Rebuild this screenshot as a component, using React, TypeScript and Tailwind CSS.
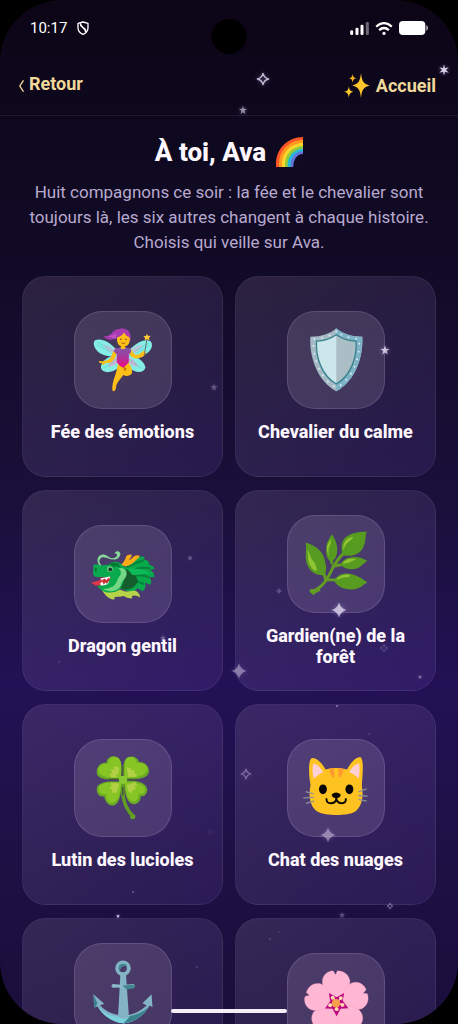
import React from "react";

type StarKind = "four" | "outline" | "five" | "six" | "dot";

interface Star {
  kind: StarKind;
  x: number;
  y: number;
  size: number;
  opacity: number;
}

interface Companion {
  id: string;
  label: string;
  icon: React.ReactNode;
}

const STARS: Star[] = [
  { kind: "outline", x: 263, y: 79, size: 14, opacity: 0.8 },
  { kind: "six", x: 444, y: 70, size: 11, opacity: 0.9 },
  { kind: "five", x: 243, y: 110, size: 8, opacity: 0.6 },
  { kind: "five", x: 214, y: 387, size: 7, opacity: 0.3 },
  { kind: "five", x: 385, y: 350, size: 9, opacity: 0.8 },
  { kind: "dot", x: 190, y: 558, size: 5, opacity: 0.25 },
  { kind: "five", x: 163, y: 638, size: 6, opacity: 0.35 },
  { kind: "dot", x: 59, y: 662, size: 3, opacity: 0.1 },
  { kind: "four", x: 279, y: 591, size: 6, opacity: 0.25 },
  { kind: "four", x: 339, y: 610, size: 15, opacity: 0.75 },
  { kind: "outline", x: 384, y: 648, size: 9, opacity: 0.25 },
  { kind: "dot", x: 420, y: 677, size: 4, opacity: 0.4 },
  { kind: "four", x: 239, y: 671, size: 15, opacity: 0.45 },
  { kind: "outline", x: 246, y: 774, size: 12, opacity: 0.4 },
  { kind: "four", x: 328, y: 835, size: 15, opacity: 0.45 },
  { kind: "dot", x: 337, y: 706, size: 2, opacity: 0.8 },
  { kind: "dot", x: 369, y: 734, size: 3, opacity: 0.1 },
  { kind: "outline", x: 210, y: 832, size: 7, opacity: 0.1 },
  { kind: "dot", x: 133, y: 892, size: 2, opacity: 0.5 },
  { kind: "five", x: 118, y: 916, size: 4, opacity: 0.9 },
  { kind: "outline", x: 390, y: 906, size: 7, opacity: 0.6 },
  { kind: "five", x: 342, y: 915, size: 6, opacity: 0.3 },
  { kind: "dot", x: 197, y: 967, size: 2, opacity: 0.3 },
  { kind: "dot", x: 279, y: 932, size: 2, opacity: 0.15 },
  { kind: "dot", x: 270, y: 939, size: 3, opacity: 0.15 },
];

function StarShape({ kind }: { kind: StarKind }) {
  switch (kind) {
    case "four":
      return <path d="M10 0Q12 8 20 10Q12 12 10 20Q8 12 0 10Q8 8 10 0Z" fill="currentColor" />;
    case "outline":
      return (
        <path
          d="M10 2Q11.500 8.500 18 10Q11.500 11.500 10 18Q8.500 11.500 2 10Q8.500 8.500 10 2Z"
          fill="none"
          stroke="currentColor"
          strokeWidth="2"
          strokeLinejoin="round"
        />
      );
    case "five":
      return <path d="M10 0L12.500 7L20 7.500L14 12L16 20L10 15.500L4 20L6 12L0 7.500L7.500 7Z" fill="currentColor" />;
    case "six":
      return (
        <path
          d="M10 0L11.800 7L18.700 5L13.500 10L18.700 15L11.800 13L10 20L8.200 13L1.300 15L6.500 10L1.300 5L8.200 7Z"
          fill="currentColor"
        />
      );
    default:
      return <circle cx="10" cy="10" r="8" fill="currentColor" />;
  }
}

// Decorative twinkling sky that floats over the whole screen
function StarField() {
  return (
    <div className="pointer-events-none absolute inset-0 text-[#efe6ff]" aria-hidden="true">
      {STARS.map((star, i) => (
        <svg
          key={i}
          viewBox="0 0 20 20"
          className="absolute -translate-x-1/2 -translate-y-1/2 overflow-visible drop-shadow-[0_0_2px_rgba(200,180,255,0.5)]"
          style={{ left: star.x, top: star.y, width: star.size, height: star.size, opacity: star.opacity }}
        >
          <StarShape kind={star.kind} />
        </svg>
      ))}
    </div>
  );
}

function FairyIcon() {
  return (
    <svg viewBox="159 107 294 296" className="size-full" aria-hidden="true">
      <defs>
        <linearGradient id="suit" x1="0" y1="0" x2="0" y2="1">
          <stop offset="0" stopColor="#7e57b0" />
          <stop offset="0.450" stopColor="#a63a9c" />
          <stop offset="0.850" stopColor="#e0128c" />
        </linearGradient>
      </defs>
      <path d="M296 236C276 205 240 184 220 194C209 203 221 231 245 239C264 246 285 247 296 236Z" fill="#84eee5" />
      <path d="M316 236C336 208 370 187 391 197C402 209 391 232 371 238C353 246 333 248 316 236Z" fill="#84eee5" />
      <path d="M293 240C264 240 236 257 238 279C242 298 273 296 293 278C304 265 302 247 293 240Z" fill="#84eee5" />
      <path d="M319 240C347 241 373 258 375 278C371 297 343 296 322 277C309 262 309 246 319 240Z" fill="#84eee5" />
      <path d="M296 236C280 218 258 207 244 208C257 229 277 239 296 240Z" fill="#b9c9d8" />
      <path d="M318 236C333 217 352 207 368 208C355 231 337 239 318 240Z" fill="#b9c9d8" />
      <path d="M288 246Q264 255 260 276Q277 276 292 260ZM323 247Q347 257 354 276Q337 276 320 260Z" fill="#c9b5d1" />
      <path
        d="M226 200L276 226M224 208L270 231M248 280L286 253M387 202L342 228M386 211L348 234M363 281L326 253"
        stroke="#4ec3c4"
        strokeWidth="1.500"
        fill="none"
      />
      <path d="M290 265C288 292 278 309 275 326C273 336 272 345 274 350Q278 353 282 348Q285 340 286 331C292 317 302 310 307 301C319 308 334 302 334 293C334 283 331 273 324 264Z" fill="#fdbf16" />
      <path d="M306 278Q312 276 318 281L312 291Z" fill="#c77a0b" />
      <path d="M300 207H312V222H300Z" fill="#f5a914" />
      <path d="M286 219C275 224 273 240 266 251Q254 261 235 258Q229 260 234 264H243Q239 270 244 271L253 264C267 266 278 258 285 240ZM326 219C335 224 336 236 345 239C355 240 362 233 370 226L377 231Q374 244 361 247C347 253 333 250 327 239Z" fill="#fdbf16" />
      <path d="M281 221Q305 213 330 220L331 230L324 238V262Q316 272 307 279Q295 275 287 262V237L277 229Z" fill="url(#suit)" />
      <path d="M298 219Q306 225 314 219L312 214H300Z" fill="#fdbf16" />
      <path d="M286 187C272 196 253 193 246 181C260 184 264 177 271 173C275 165 287 158 306 158C326 160 332 174 329 195L288 199Z" fill="#a83ab1" />
      <path d="M284 189C274 188 265 184 259 181Q273 183 286 171Z" fill="#bc52c2" />
      <path d="M288 185Q301 183 309 170Q315 181 326 185C330 202 321 214 306 214C292 213 286 202 288 185Z" fill="#fdbf16" />
      <circle cx="299" cy="191" r="2.500" fill="#6d4430" />
      <circle cx="315" cy="191" r="2.500" fill="#6d4430" />
      <path d="M301 202Q307 207 313 202" stroke="#8a4b1c" strokeWidth="2.500" fill="none" />
      <path d="M380 190L371 243" stroke="#62585d" strokeWidth="2.500" />
      <path d="M379 174L383 180L391 181L386 187L388 194L380 191L373 194L374 187L369 181L377 181Z" fill="#fdca35" />
    </svg>
  );
}

function ShieldIcon() {
  return (
    <svg viewBox="169 107 294 296" className="size-full" aria-hidden="true">
      <path d="M317 157C298 174 270 183 237 183C233 245 259 320 317 351C375 320 401 245 397 183C364 183 336 174 317 157Z" fill="#a5bac5" />
      <path d="M317 157C336 174 364 183 397 183C401 245 375 320 317 351V328L374 265L378 199L317 178Z" fill="#7eb2c6" />
      <path d="M317 177C300 189 279 196 256 197C253 250 274 305 317 329C360 305 381 250 378 197C355 196 334 189 317 177Z" fill="#cce7ec" />
      <path d="M317 177C334 189 355 196 378 197C381 250 360 305 317 329Z" fill="#abbdc5" />
      <path
        d="M317 177C300 189 279 196 256 197C253 250 274 305 317 329C360 305 381 250 378 197C355 196 334 189 317 177Z"
        fill="none"
        stroke="#35828c"
        strokeWidth="4"
      />
      <path
        d="M317 167C299 181 273 189 247 190C243 245 264 311 317 341C370 311 391 245 387 190C361 189 335 181 317 167Z"
        fill="none"
        stroke="#d9eef3"
        strokeWidth="6"
        strokeLinecap="round"
        strokeDasharray="0.100 24"
      />
    </svg>
  );
}

function DragonIcon() {
  return (
    <svg viewBox="159 120 294 294" className="size-full" aria-hidden="true">
      <path d="M333 232C345 210 365 211 374 217L368 224C378 221 386 229 388 238L379 238C393 239 403 246 402 251L388 255C400 260 402 268 402 277L386 276C396 286 392 297 389 300L373 293C378 305 371 317 366 320L350 310C345 319 333 325 321 320L292 310L302 252Z" fill="#08a94b" />
      <path
        d="M318 246C346 231 356 229 369 225M325 262C347 246 373 247 390 250M329 278C350 267 370 270 387 278M327 295C344 288 358 291 370 298"
        stroke="#05833e"
        strokeWidth="6"
        fill="none"
      />
      <path d="M313 251C334 262 354 279 351 291C338 315 317 320 299 311Z" fill="#145e2d" />
      <path d="M321 251C345 247 377 254 391 267C371 264 352 272 334 270Z" fill="#0dbb59" />
      <path d="M240 312C253 313 292 312 306 318C323 325 338 315 347 320Q358 327 358 339Q345 330 332 335Q337 340 331 342Q318 341 308 334Q299 335 295 337Q281 336 278 340Q285 345 276 345C257 341 248 328 240 312Z" fill="#b7d349" />
      <path d="M298 241Q312 229 316 212Q323 205 333 208Q333 216 322 226Q333 221 340 213Q348 207 357 211Q356 218 345 225Q334 240 313 243Z" fill="#faaa17" />
      <path d="M262 239Q272 226 292 231L307 242C317 257 317 271 309 286C303 310 293 321 275 323C254 326 237 319 227 302L263 291L265 278L224 276C213 275 213 262 216 249C211 237 225 233 236 241Z" fill="#09aa4e" />
      <path d="M292 249Q318 248 317 267C316 282 302 286 300 300C294 322 262 324 244 313Q267 312 278 303C289 293 288 280 297 272C302 265 300 256 292 249Z" fill="#75d783" />
      <path d="M237 277Q247 280 268 276Q266 291 248 301L229 303L236 286Z" fill="#ce3039" />
      <path d="M237 281L265 275L267 281L260 279L256 286L249 281L240 290ZM235 297L242 289L247 299L253 292L257 298L264 287Q263 303 239 302Z" fill="#fff" />
      <path d="M208 292C219 293 226 287 235 286L246 283C240 297 225 303 221 303C223 298 213 300 208 292Z" fill="#dd3845" />
      <path d="M235 242C220 223 231 206 246 207C262 209 265 223 281 217C292 213 288 202 281 205C279 197 294 193 298 204C298 219 282 226 267 221C254 218 243 211 236 221Q230 229 240 240Z" fill="#85d895" />
      <path d="M263 236Q275 228 292 234L299 249L287 243L277 246Z" fill="#067936" />
      <ellipse cx="266" cy="252" rx="9" ry="9" fill="#79d282" />
      <circle cx="267" cy="253" r="6" fill="#173b28" />
      <ellipse cx="223" cy="254" rx="3" ry="6" fill="#087136" />
    </svg>
  );
}

function HerbIcon() {
  return (
    <svg viewBox="169 87 294 296" className="size-full" aria-hidden="true">
      <path
        d="M239 319C266 315 285 291 301 257C311 236 322 219 341 200M303 232L301 215M307 242L337 236M289 284H319M285 287L278 262"
        stroke="#639c22"
        strokeWidth="9"
        fill="none"
        strokeLinecap="round"
      />
      <path d="M236 314C244 309 252 318 262 309L269 317C257 324 252 323 248 331Q238 328 236 314Z" fill="#639c22" />
      <path d="M222 169C253 179 277 194 283 230C289 249 284 266 277 270C246 270 229 251 224 226C220 205 227 189 222 169Z" fill="#579b20" />
      <path d="M302 143C313 154 323 179 319 202C316 216 309 226 302 227C290 224 284 207 286 187C286 166 295 161 302 143Z" fill="#579b20" />
      <path d="M411 135C385 136 351 140 338 162C331 176 332 192 336 208C363 213 389 207 400 183C409 168 405 151 411 135Z" fill="#579b20" />
      <path d="M413 226C399 217 383 211 360 215C342 217 331 231 331 239C342 250 360 253 378 250C394 245 401 232 413 226Z" fill="#579b20" />
      <path d="M413 292C397 280 375 263 347 264C327 264 314 277 310 287C320 307 347 316 372 313C392 310 401 297 413 292Z" fill="#579b20" />
      <path d="M228 190C235 199 236 216 246 226Q258 241 256 258C238 250 231 232 230 216ZM299 159Q303 171 294 184Q291 197 294 210Q286 197 289 179ZM338 192C337 169 348 153 370 151C366 160 353 166 346 176ZM336 234Q345 219 364 219Q376 217 377 222Q365 225 356 231ZM319 280Q335 266 356 268Q363 273 351 276Q334 274 319 284Z" fill="#91c533" />
    </svg>
  );
}

function CloverIcon() {
  return (
    <svg viewBox="159 117 294 296" className="size-full" aria-hidden="true">
      <path d="M305 243C303 287 307 323 338 353" fill="none" stroke="#619d25" strokeWidth="11" />
      <circle cx="336" cy="353" r="8" fill="#659f24" />
      <path d="M302 237C290 230 291 230 299 228C304 205 303 178 288 170C272 162 257 171 255 187C235 186 224 200 225 218C226 237 259 243 302 237Z" fill="#6aab25" />
      <path d="M308 236C304 204 306 177 321 170C337 163 354 172 355 185C374 184 388 199 386 216C383 238 345 241 308 236Z" fill="#6aab25" />
      <path d="M303 246C265 243 227 245 225 267C224 285 237 293 248 291C252 313 265 321 279 318C297 313 301 276 303 246Z" fill="#6aab25" />
      <path d="M309 244C348 240 379 248 381 271C380 286 369 292 361 290C361 309 347 319 331 313C316 305 311 277 309 244Z" fill="#6aab25" />
      <path d="M300 235C300 208 305 179 289 171C274 164 261 174 260 190C241 187 228 199 230 213C236 232 270 235 300 235ZM311 235C309 206 310 178 321 171C335 166 348 175 348 188C365 184 381 193 381 206C379 231 343 234 311 235ZM300 248C266 245 232 249 231 265C230 280 241 288 254 284C253 305 264 314 277 310C295 304 298 272 300 248ZM312 248C348 245 378 256 374 272C374 283 363 285 354 282C355 303 343 311 330 304C315 295 315 273 312 248Z" fill="#86c524" />
      <path d="M294 201L278 199L279 208L268 208L273 219L265 222L270 233L286 232L285 224L292 222ZM317 201L331 203L329 210L341 209L340 218L350 223L344 231L322 230ZM296 251L268 249L271 260L263 263L272 270L273 280H286ZM318 257L343 246L350 256L342 260L346 269L337 270L333 282L322 274Z" fill="#b1d046" />
      <path d="M305 197V235M305 262V288M262 238H296M317 239H347" stroke="#455a37" strokeWidth="5" fill="none" />
      <circle cx="306" cy="240" r="13" fill="#88c832" />
    </svg>
  );
}

function CatIcon() {
  return (
    <svg viewBox="169 117 294 294" className="size-full" aria-hidden="true">
      <path d="M238 255C231 216 232 177 242 172C258 170 272 187 284 207Q315 198 350 207C362 184 381 166 393 171C402 185 397 224 395 257C401 289 396 321 374 337C350 350 286 350 260 337C236 321 231 291 238 255Z" fill="#ffc321" />
      <path d="M247 190C258 188 269 203 277 215Q265 221 248 235C243 220 243 197 247 190ZM386 188C375 190 363 204 356 214Q372 221 385 235C390 218 389 196 386 188Z" fill="#ffd0d3" />
      <path d="M295 206L310 203L311 229Q310 233 305 232Q299 223 295 206ZM323 203L340 206Q335 226 330 231Q325 233 324 228Z" fill="#ff9b2e" />
      <ellipse cx="276" cy="268" rx="12" ry="15" fill="#0a0604" />
      <ellipse cx="357" cy="268" rx="12" ry="15" fill="#0a0604" />
      <path d="M303 283Q316 273 330 283Q331 292 321 295L317 300L313 295Q302 292 303 283Z" fill="#0a0604" />
      <path d="M287 298Q286 310 300 311Q313 311 317 299Q322 311 334 311Q347 310 346 298" stroke="#0a0604" strokeWidth="6" strokeLinecap="round" fill="none" />
      <path d="M223 275L247 282M216 294L248 293M224 311L249 304M410 267L385 276M413 289L384 287M410 304L385 299" stroke="#8e9297" strokeWidth="4" fill="none" />
    </svg>
  );
}

function AnchorIcon() {
  return (
    <svg viewBox="219 126 294 296" className="size-full" aria-hidden="true">
      <path d="M358 217H375L384 345Q411 341 439 316L426 309L454 281L457 321L448 316C429 350 397 368 368 370C335 368 306 350 288 319L277 322L275 281L308 310L295 316Q320 341 351 345Z" fill="#83b3c5" />
      <path d="M288 319Q314 349 350 350L368 357L388 350C414 346 432 334 444 320C428 350 397 369 368 371C335 368 304 348 288 319Z" fill="#79d2dc" />
      <path d="M368 370L388 348Q419 343 444 321C428 350 397 369 368 370ZM275 281L287 309L281 321L277 322Z" fill="#38828d" />
      <path d="M335 249Q367 254 399 249Q405 257 399 262L370 263Q353 258 335 261Q326 256 335 249Z" fill="#8bbac9" />
      <path d="M363 254L402 252Q406 261 396 263L378 266Z" fill="#418792" />
      <circle cx="366" cy="201" r="18" fill="none" stroke="#83b3c5" strokeWidth="12" />
      <path d="M352 202Q352 187 367 187Q377 187 379 194Q358 191 356 211Z" fill="#418792" />
    </svg>
  );
}

function BlossomIcon() {
  return (
    <svg viewBox="175 158 294 296" className="size-full" aria-hidden="true">
      <g fill="#ffb7d3" stroke="#f79fc4" strokeWidth="1">
        <path id="petal" d="M324 309C309 285 278 268 280 241C282 221 299 210 313 210L321 222L326 210C348 210 363 224 365 243C365 266 337 286 324 309Z" />
        <use href="#petal" transform="rotate(72 324 309)" />
        <use href="#petal" transform="rotate(144 324 309)" />
        <use href="#petal" transform="rotate(216 324 309)" />
        <use href="#petal" transform="rotate(288 324 309)" />
      </g>
      <path d="M324 291L347 278L343 302L360 325L336 327L324 350L311 327L288 326L304 304L300 278Z" fill="#bf087f" />
      <path d="M324 309L314 292M324 309L337 294M324 309L342 315M324 309L324 328M324 309L304 316" stroke="#ffd6a0" strokeWidth="4" />
      <g fill="#ffdab4">
        <circle cx="312" cy="293" r="6" />
        <circle cx="337" cy="294" r="6" />
        <circle cx="342" cy="315" r="6" />
        <circle cx="324" cy="328" r="6" />
        <circle cx="304" cy="316" r="6" />
      </g>
      <circle cx="322" cy="310" r="13" fill="#f6a04c" />
    </svg>
  );
}

function SparklesIcon() {
  return (
    <svg viewBox="0 0 75 72" className="h-[25px] w-[26px]" aria-hidden="true">
      <g fill="#fdc62c">
        <path d="M49 0C52 25 56 31 74 36C56 41 52 47 49 72C46 47 42 41 24 36C42 31 46 25 49 0Z" />
        <path d="M14 38C16 50 18 52 28 54C18 56 16 59 14 71C12 59 10 56 0 54C10 52 12 50 14 38Z" />
        <path d="M25 3C27 12 28 14 36 15C28 17 27 18 25 28C23 18 22 17 14 15C22 14 23 12 25 3Z" fill="#f5ae1d" />
      </g>
    </svg>
  );
}

function RainbowIcon() {
  return (
    <svg viewBox="0 0 81 90" className="h-[30px] w-[27px]" aria-hidden="true">
      <path d="M0 90V78C0 36 36 0 81 0V90Z" fill="#ff5627" />
      <path d="M9 90V79C9 41 41 9 81 9V90Z" fill="#ff9c20" />
      <path d="M18 90V80C18 46 46 18 81 18V90Z" fill="#ffd52c" />
      <path d="M27 90V81C27 51 51 27 81 27V90Z" fill="#8fcb3c" />
      <path d="M35 90V82C35 56 56 35 81 35V90Z" fill="#27b8d8" />
      <path d="M44 90V83C44 60 60 43 81 43V90Z" fill="#6274dc" />
      <path d="M52 90C52 68 62 51 81 51V90Z" fill="#110a22" />
    </svg>
  );
}

const COMPANIONS: Companion[] = [
  { id: "fairy", label: "Fée des émotions", icon: <FairyIcon /> },
  { id: "knight", label: "Chevalier du calme", icon: <ShieldIcon /> },
  { id: "dragon", label: "Dragon gentil", icon: <DragonIcon /> },
  { id: "forest", label: "Gardien(ne) de la forêt", icon: <HerbIcon /> },
  { id: "clover", label: "Lutin des lucioles", icon: <CloverIcon /> },
  { id: "cat", label: "Chat des nuages", icon: <CatIcon /> },
  { id: "anchor", label: "Capitaine des marées douces", icon: <AnchorIcon /> },
  { id: "blossom", label: "Fleur magique", icon: <BlossomIcon /> },
];

function StatusBar() {
  return (
    <div className="flex h-14 shrink-0 items-center justify-between px-[30px] text-white">
      <div className="flex items-center gap-2.5">
        <span className="text-[15px] leading-5">10:17</span>
        <svg viewBox="0 0 36 42" className="h-3.5 w-3" fill="none" stroke="currentColor" strokeWidth="4" aria-hidden="true">
          <path d="M18 3L33 7V20C33 30 27 36 18 40C9 36 3 30 3 20V7Z" strokeLinejoin="round" />
          <path d="M10 7Q10 15 18 20Q27 25 26 33" strokeWidth="5" />
        </svg>
      </div>
      <div className="flex items-center gap-1.5">
        <svg viewBox="0 0 56 39" className="h-[13px] w-[19px]" fill="currentColor" aria-hidden="true">
          <rect x="0" y="25" width="9" height="14" rx="4" />
          <rect x="16" y="17" width="9" height="22" rx="4" />
          <rect x="31" y="8" width="9" height="31" rx="4" />
          <rect x="47" y="0" width="9" height="39" rx="4" opacity="0.400" />
        </svg>
        <svg viewBox="0 0 54 40" className="h-[13px] w-[18px]" fill="none" stroke="currentColor" strokeWidth="7" aria-hidden="true">
          <path d="M3 14Q27 -7 51 14M12 25Q27 12 42 25" />
          <circle cx="27" cy="35" r="5" fill="currentColor" stroke="none" />
        </svg>
        <svg viewBox="0 0 87 42" className="h-3.5 w-[29px]" fill="currentColor" aria-hidden="true">
          <rect x="0" y="0" width="79" height="42" rx="12" />
          <path d="M82 13Q87 14 87 21Q87 28 82 29Z" opacity="0.700" />
        </svg>
      </div>
    </div>
  );
}

function CompanionCard({ companion }: { companion: Companion }) {
  return (
    <button
      type="button"
      className="flex aspect-square flex-col items-center justify-center gap-3 rounded-3xl border border-white/6 bg-gradient-to-br from-[#ffe6ff]/11 to-[#a06eff]/11 px-4"
    >
      <span className="block size-[98px] shrink-0 rounded-[28px] border border-[#e6c8ff]/15 bg-[#ffe6ff]/13">
        {companion.icon}
      </span>
      <span className="text-center text-[18px] leading-[21px] font-extrabold text-[#fff8ff]">{companion.label}</span>
    </button>
  );
}

export default function App() {
  return (
    <div className="h-screen bg-black font-[Roboto,sans-serif]">
      <div className="relative flex h-full flex-col overflow-hidden rounded-[62px] bg-[linear-gradient(180deg,#0c0516_0%,#0e081e_12%,#120b28_28%,#1a103c_50%,#231155_67%,#1e1043_85%,#1a0e3b_100%)]">
        <StatusBar />
        <div className="absolute top-[19px] left-1/2 size-[35px] -translate-x-1/2 rounded-full bg-black" />

        <header className="flex h-[60px] shrink-0 items-center justify-between border-b border-white/8 pr-[22px] pl-[18px] text-[18px] font-bold text-[#f0d99a]">
          <a href="#retour" className="flex items-center gap-1 pb-1">
            <svg viewBox="0 0 18 36" className="mt-1 h-3 w-[7px]" fill="none" stroke="currentColor" strokeWidth="4" aria-hidden="true">
              <path d="M15 1L4 18L15 35" />
            </svg>
            Retour
          </a>
          <a href="#accueil" className="flex items-center gap-1.5">
            <SparklesIcon />
            Accueil
          </a>
        </header>

        <main className="min-h-0 flex-1 overflow-y-auto px-[22px] pt-5 pb-8 [scrollbar-width:none]">
          <h1 className="flex items-center justify-center gap-2.5 text-[26px] leading-8 font-extrabold text-[#fff8ff]">
            À toi, Ava
            <RainbowIcon />
          </h1>
          <p className="mt-3 text-center text-[17px] leading-[25px] text-[#b8a9cf]">
            Huit compagnons ce soir : la fée et le chevalier sont toujours là, les six autres changent à chaque histoire.
            Choisis qui veille sur Ava.
          </p>

          <div className="mt-[21px] grid grid-cols-2 gap-x-3 gap-y-[13px]">
            {COMPANIONS.map((companion) => (
              <CompanionCard key={companion.id} companion={companion} />
            ))}
          </div>
        </main>

        <StarField />
        <div className="absolute bottom-[11px] left-1/2 h-1 w-[116px] -translate-x-1/2 rounded-full bg-[#f5eef8]" />
      </div>
    </div>
  );
}
